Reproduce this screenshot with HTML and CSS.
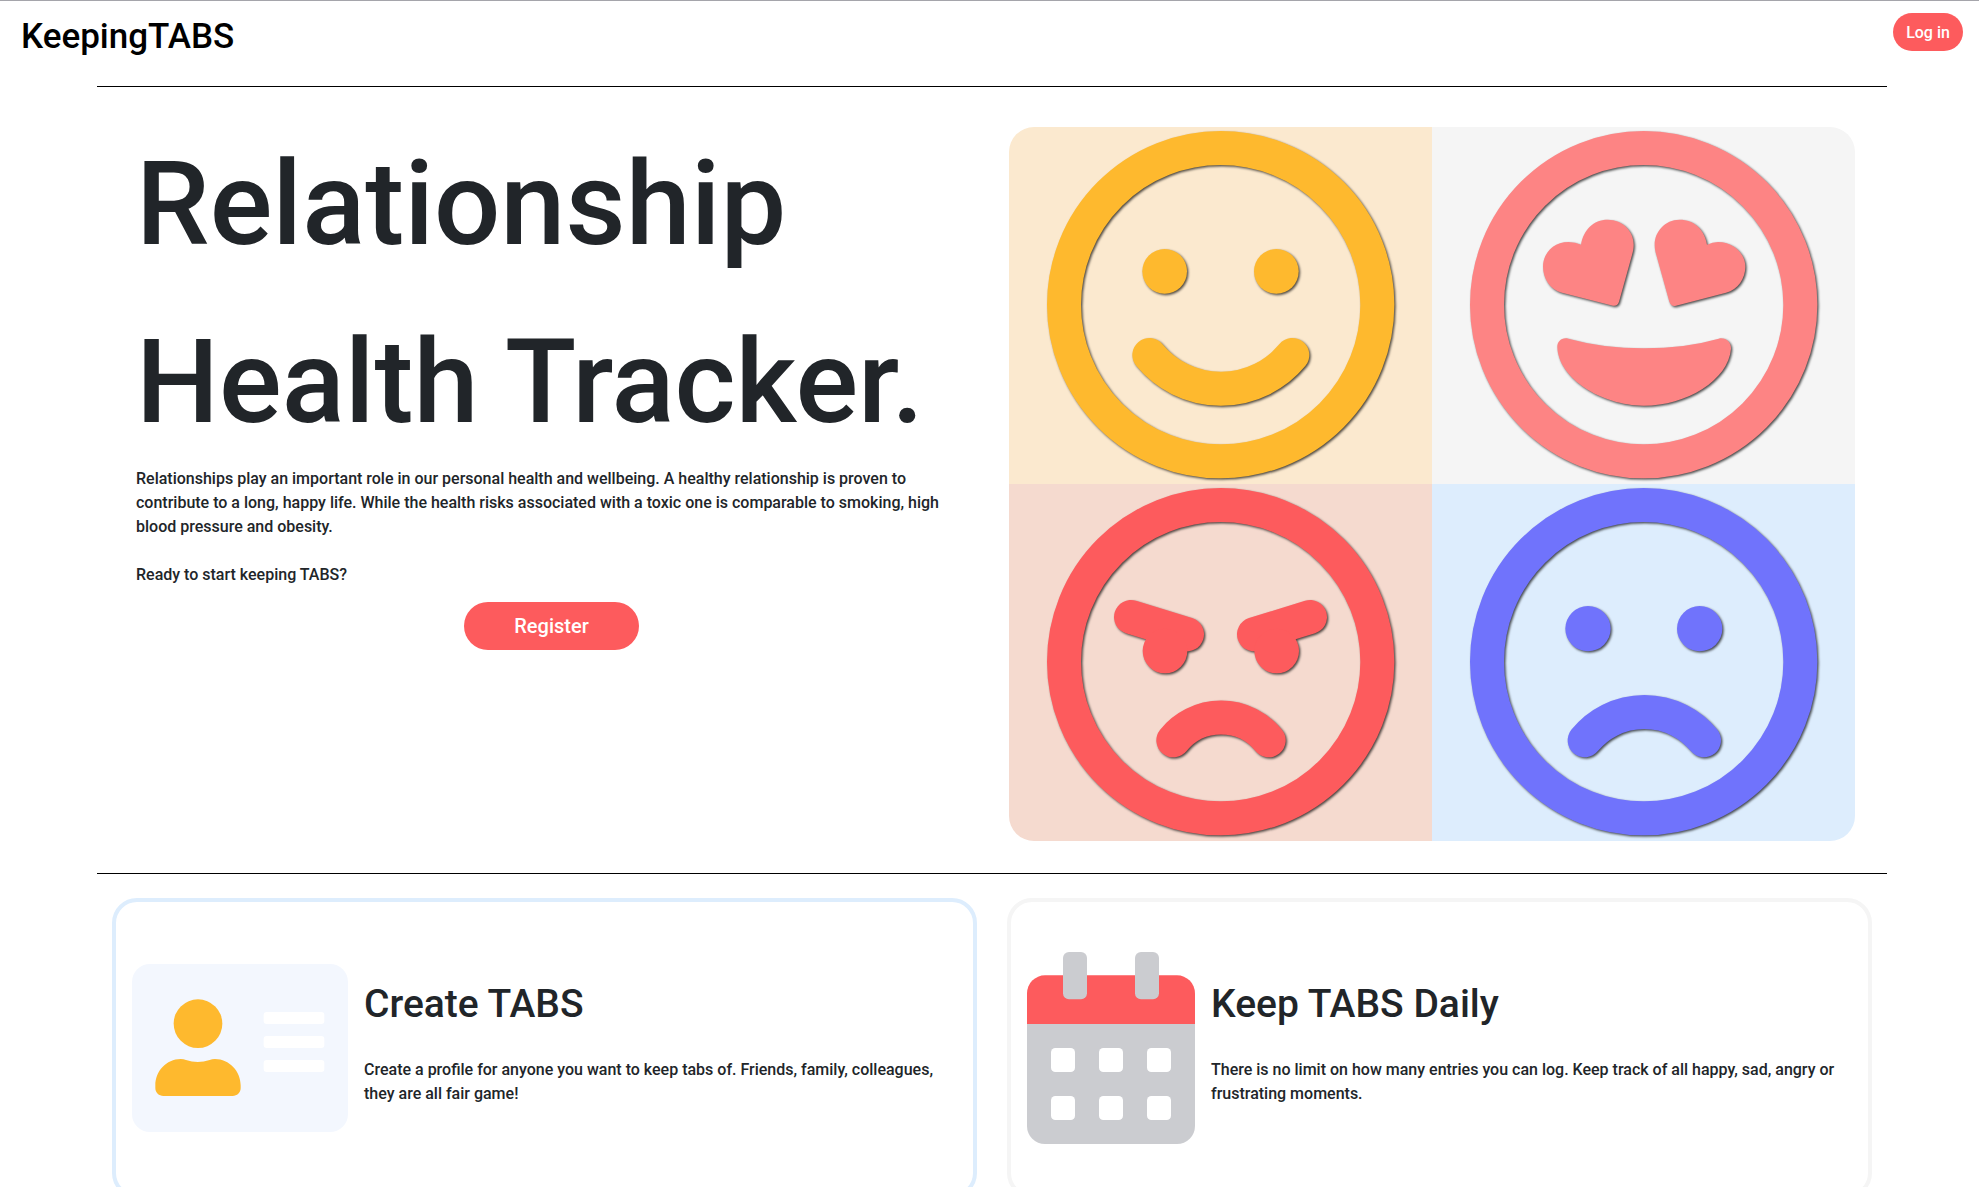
FILE: index.html
```html
<!DOCTYPE html>
<html lang="en">
<head>
<meta charset="utf-8">
<meta name="viewport" content="width=device-width, initial-scale=1">
<title>KeepingTABS</title>
<link rel="stylesheet" href="styles.css">
</head>
<body>
<header class="topbar">
  <a class="brand" href="#">KeepingTABS</a>
  <button class="btn btn-login" type="button">Log in</button>
</header>
<main class="page">
  <section class="hero">
    <div class="intro">
      <h1 class="headline">Relationship Health Tracker.</h1>
      <p class="copy">Relationships play an important role in our personal health and wellbeing. A healthy relationship is proven to contribute to a long, happy life. While the health risks associated with a toxic one is comparable to smoking, high blood pressure and obesity.</p>
      <p class="copy">Ready to start keeping TABS?</p>
      <button class="btn btn-register" type="button">Register</button>
    </div>
    <div class="moods">
      <svg class="mood mood-happy" viewBox="27 21 1269 1071" role="img" aria-label="Happy">
        <g class="face">
          <circle class="line" cx="662" cy="554" r="470"/>
          <circle cx="494" cy="454" r="67"/>
          <circle cx="829" cy="454" r="67"/>
          <path class="line" d="M448 705A278 278 0 0 0 877 705"/>
        </g>
      </svg>
      <svg class="mood mood-love" viewBox="6 21 1269 1071" role="img" aria-label="In love">
        <g class="face">
          <circle class="line" cx="641" cy="554" r="470"/>
          <path d="M453 374C460 330 490 299 533 299C580 299 611 335 611 374C611 385 609 395 606 405L567 545Q563 559 549 557L396 518C360 508 339 475 339 440C339 400 370 366 415 366Q437 366 453 374Z"/>
          <path d="M831 374C824 330 794 299 748 299C705 299 674 335 674 374C674 385 676 395 679 405L718 545Q724 561 738 557L888 518C924 508 946 475 946 440C946 400 909 366 864 366Q847 366 831 374Z"/>
          <path d="M415 656Q520 685 641 685Q765 685 866 656C886 651 904 666 903 686C895 780 770 857 641 857C515 857 385 775 382 682C381 665 395 651 415 656Z"/>
        </g>
      </svg>
      <svg class="mood mood-angry" viewBox="27 12 1269 1071" role="img" aria-label="Angry">
        <g class="face">
          <circle class="line" cx="662" cy="545" r="470"/>
          <path class="line" d="M393 411L561 463M930 411L762 463M520 781A184 184 0 0 1 806 781"/>
          <circle cx="495" cy="513" r="67"/>
          <circle cx="830" cy="513" r="67"/>
        </g>
      </svg>
      <svg class="mood mood-sad" viewBox="6 12 1269 1071" role="img" aria-label="Sad">
        <g class="face">
          <circle class="line" cx="641" cy="545" r="470"/>
          <circle cx="474" cy="446" r="68"/>
          <circle cx="809" cy="446" r="68"/>
          <path class="line" d="M464 781A231 231 0 0 1 822 781"/>
        </g>
      </svg>
    </div>
  </section>
  <section class="features">
    <article class="card card-blue">
      <svg class="card-icon icon-profile" viewBox="98 276 648 576" aria-hidden="true">
        <rect class="sheet" x="98" y="312" width="648" height="504" rx="54"/>
        <g class="rows">
          <rect x="493" y="456" width="182" height="36" rx="9"/>
          <rect x="493" y="528" width="182" height="36" rx="9"/>
          <rect x="493" y="600" width="182" height="36" rx="9"/>
        </g>
        <g class="person">
          <circle cx="296" cy="491" r="73"/>
          <path d="M244 597Q253 597 260 600Q295 612 331 600Q338 597 347 597C390 597 424 634 424 676V685C424 698 413 708 400 708H192C179 708 168 698 168 685V676C168 634 201 597 244 597Z"/>
        </g>
      </svg>
      <div class="card-body">
        <h2 class="card-title">Create TABS</h2>
        <p class="copy">Create a profile for anyone you want to keep tabs of. Friends, family, colleagues, they are all fair game!</p>
      </div>
    </article>
    <article class="card card-gray">
      <svg class="card-icon icon-calendar" viewBox="201 276 504 576" aria-hidden="true">
        <path class="metal" d="M201 492H705V798A54 54 0 0 1 651 852H255A54 54 0 0 1 201 798Z"/>
        <path class="band" d="M201 492V400A54 54 0 0 1 255 346H651A54 54 0 0 1 705 400V492Z"/>
        <rect class="metal" x="309" y="276" width="72" height="142" rx="18"/>
        <rect class="metal" x="525" y="276" width="72" height="142" rx="18"/>
        <g class="rows">
          <rect x="273" y="564" width="72" height="72" rx="13"/>
          <rect x="417" y="564" width="72" height="72" rx="13"/>
          <rect x="561" y="564" width="72" height="72" rx="13"/>
          <rect x="273" y="708" width="72" height="72" rx="13"/>
          <rect x="417" y="708" width="72" height="72" rx="13"/>
          <rect x="561" y="708" width="72" height="72" rx="13"/>
        </g>
      </svg>
      <div class="card-body">
        <h2 class="card-title">Keep TABS Daily</h2>
        <p class="copy">There is no limit on how many entries you can log. Keep track of all happy, sad, angry or frustrating moments.</p>
      </div>
    </article>
  </section>
</main>
</body>
</html>
```
FILE: styles.css
```css
* { box-sizing: border-box; }

body {
  margin: 0;
  border-top: 1px solid #a5a5ab;
  background: #fff;
  color: #212529;
  font-family: Roboto, "Liberation Sans", sans-serif;
  font-size: 16px;
  font-weight: 500;
  line-height: 24px;
}

h1, h2, p { margin: 0; }

.topbar {
  display: flex;
  justify-content: space-between;
  align-items: flex-start;
  min-height: 85px;
  padding: 12px 16px 0 21px;
}

.brand {
  color: #000;
  font-size: 35px;
  line-height: 48px;
  text-decoration: none;
}

.btn {
  border: 0;
  background: #fd5b5d;
  color: #fff;
  font-family: inherit;
  font-weight: 500;
  cursor: pointer;
}

.btn-login {
  min-width: 70px;
  height: 38px;
  border-radius: 20px;
  padding: 0 12px;
  font-size: 16px;
}

.btn-register {
  width: 175px;
  height: 48px;
  border-radius: 24px;
  font-size: 20px;
  align-self: center;
  margin-top: 15px;
}

.page { margin: 0 92px 24px 97px; }

.hero {
  display: grid;
  grid-template-columns: 831fr 846fr;
  gap: 42px;
  border-top: 1px solid #000;
  border-bottom: 1px solid #000;
  padding: 28px 32px 32px 39px;
}

.intro {
  display: flex;
  flex-direction: column;
}

.headline {
  margin-bottom: -4px;
  font-size: 117px;
  font-weight: 500;
  line-height: 178px;
}

.copy + .copy { margin-top: 24px; }

.moods {
  display: grid;
  grid-template-columns: 1fr 1fr;
  align-self: start;
  margin-top: 12px;
  overflow: hidden;
  border-radius: 25px;
}

.mood {
  display: block;
  width: 100%;
}

.face {
  fill: currentColor;
  filter: drop-shadow(4px 4px 3px rgba(0, 0, 0, 0.7));
}

.line {
  fill: none;
  stroke: currentColor;
  stroke-width: 102px;
  stroke-linecap: round;
}

.mood-happy { background: #fbe9cf; color: #feb92e; }
.mood-love { background: #f5f5f5; color: #fd8484; }
.mood-angry { background: #f5dacf; color: #fd5b5d; }
.mood-sad { background: #ddedfd; color: #7073fc; }

.features {
  display: grid;
  grid-template-columns: 1fr 1fr;
  gap: 30px;
  padding: 24px 15px;
}

.card {
  display: flex;
  align-items: center;
  gap: 16px;
  min-height: 300px;
  border: 4px solid;
  border-radius: 25px;
  padding: 16px;
}

.card-blue { border-color: #ddedfd; }
.card-gray { border-color: #f5f5f5; }

.card-icon {
  flex: none;
  height: 192px;
}

.sheet { fill: #f3f7fe; }
.rows { fill: #fff; }
.person { fill: #feb92e; }
.metal { fill: #cbccd0; }
.band { fill: #fd5b5d; }

.card-body {
  flex: 1;
  padding-bottom: 16px;
}

.card-title {
  margin-bottom: 24px;
  font-size: 39px;
  font-weight: 500;
  line-height: 60px;
}
```
